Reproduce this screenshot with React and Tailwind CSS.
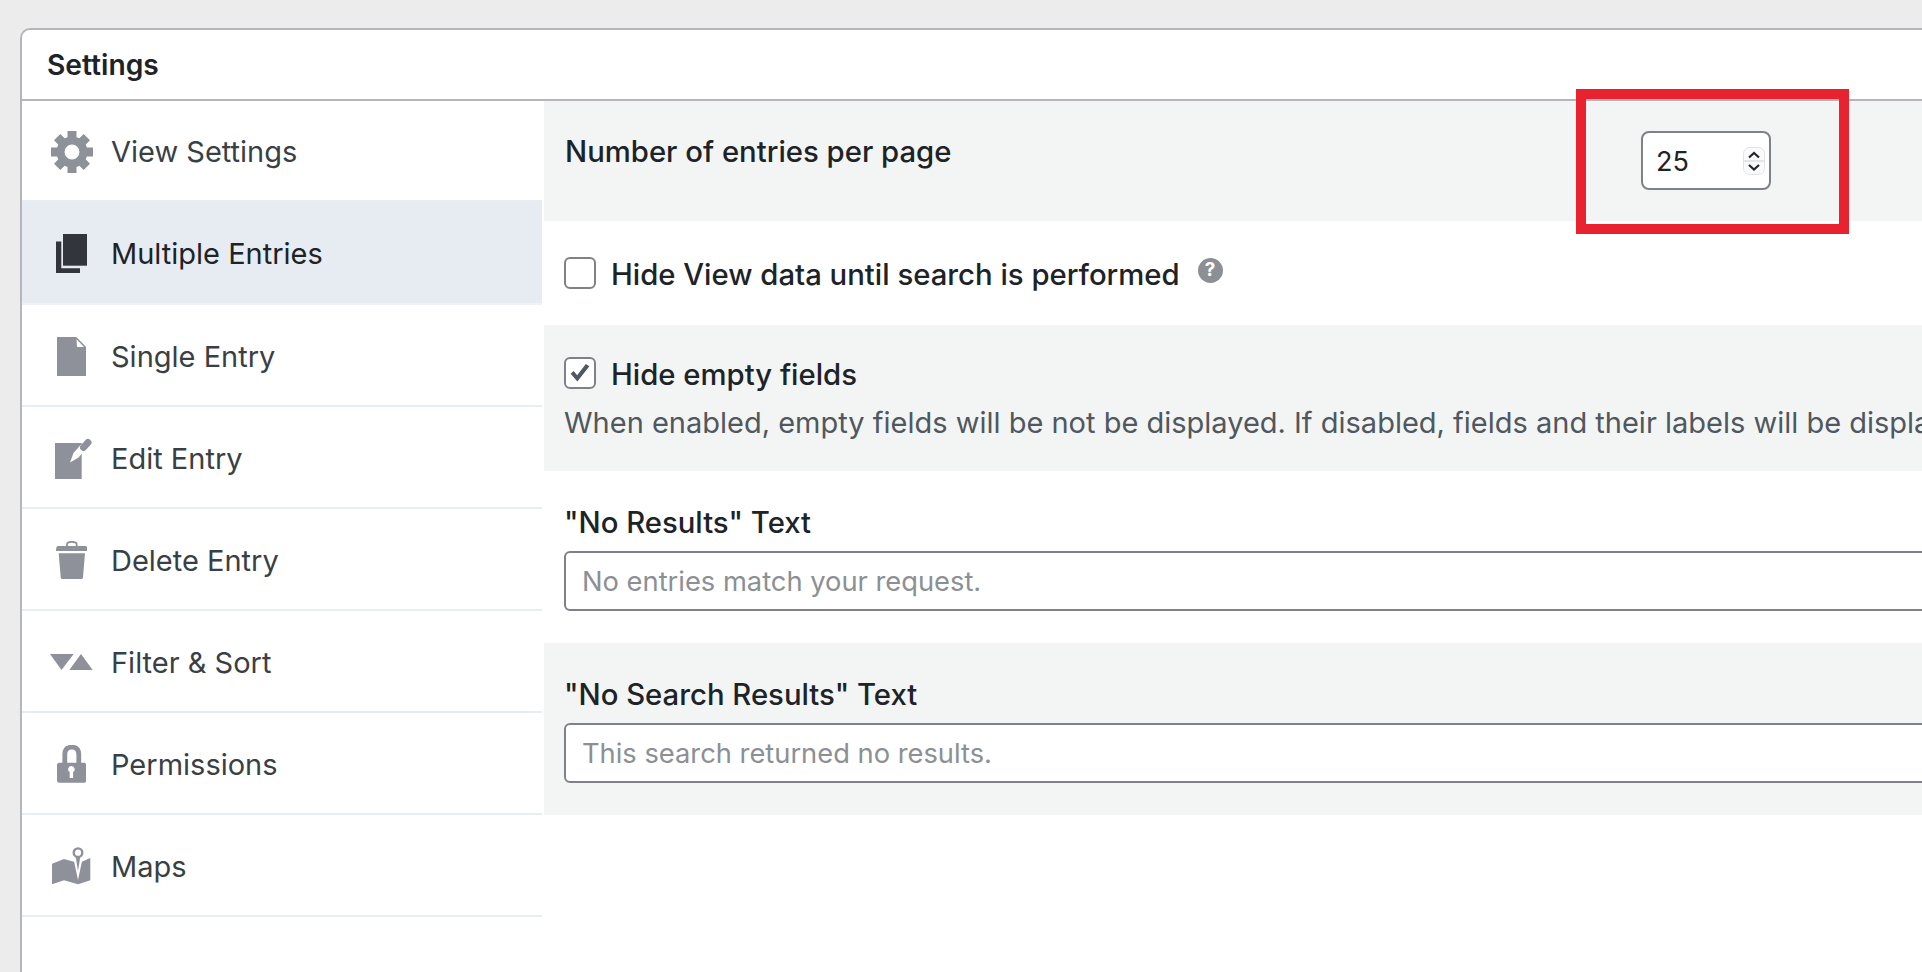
const ICON = 'fill-[#8e9199]';

const GearIcon = () => (
  <svg viewBox="0 0 42 42" className={`w-[42px] h-[42px] ${ICON}`}>
    {[0, 45, 90, 135, 180, 225, 270, 315].map(a => (
      <rect key={a} x="16.500" y="0" width="9" height="9" transform={`rotate(${a} 21 21)`} />
    ))}
    <circle cx="21" cy="21" r="11.500" fill="none" stroke="#8e9199" strokeWidth="8" />
  </svg>
);

const PagesIcon = () => (
  <svg viewBox="0 0 31.400 39" className="w-[31.400px] h-[39px] fill-[#32353b]">
    <path d="M7 0h24.400v31.700H7z" />
    <path d="M0 7.400h5.300v26.900H24V39H0z" />
  </svg>
);

const FileIcon = () => (
  <svg viewBox="0 0 29.300 39" className={`w-[29.300px] h-[39px] ${ICON}`}>
    <path d="M0 0h19.300l10 10v29H0z" />
    <path d="M19.500 2.300 27 10h-7z" className="fill-white" />
  </svg>
);

const EditIcon = () => (
  <svg viewBox="0 0 37.700 41" className={`w-[37.700px] h-[41px] ml-[5px] ${ICON}`}>
    <path d="M0 5h26.700v36H0z" />
    <path d="M15 24.500 18.500 15l7-8 5 4.500-7 8z" className="fill-white" />
    <path d="M28.500 9.500 33 4.500" stroke="#8e9199" strokeWidth="7" strokeLinecap="round" />
  </svg>
);

const TrashIcon = () => (
  <svg viewBox="0 0 31.700 38.300" className={`w-[31.700px] h-[38.300px] ${ICON}`}>
    <path d="M11 5.500V3.500C11 1.500 13 .8 15.800.8s4.900.7 4.900 2.700v2" fill="none" stroke="#8e9199" strokeWidth="1.800" />
    <path d="M2 5h27.700c1.300 0 2 1.800 2 5H0c0-3.200.7-5 2-5z" />
    <path d="M2.700 12.300h26.300l-2 24c-.1 1.300-1 2-2 2H6.700c-1 0-1.900-.7-2-2z" />
  </svg>
);

const SortIcon = () => (
  <svg viewBox="0 0 42.700 16" className={`w-[42.700px] h-[16px] ${ICON}`}>
    <path d="M0 0h23.700L11.500 16z" />
    <path d="M31 0l11.700 16H19.300z" />
  </svg>
);

const LockIcon = () => (
  <svg viewBox="0 0 29.300 37.700" className={`w-[29.300px] h-[37.700px] ${ICON}`}>
    <path d="M7.800 18v-8.500C7.800 4.500 10.500 2.200 14.800 2.200s7 2.300 7 7.300V18" fill="none" stroke="#8e9199" strokeWidth="4.800" />
    <path fillRule="evenodd" d="M2.500 17.700h24.300c1.500 0 2.500 1 2.500 2.500v15c0 1.500-1 2.500-2.500 2.500H2.500C1 37.700 0 36.700 0 35.200v-15c0-1.500 1-2.500 2.500-2.500zM14.500 21a3.300 3.300 0 0 0-1.800 6.100V33h3.400v-5.900A3.300 3.300 0 0 0 14.500 21z" />
  </svg>
);

const MapIcon = () => (
  <svg viewBox="0 0 38.300 37.300" className={`w-[38.300px] h-[37.300px] ${ICON}`}>
    <path d="M0 16.700 12 12l9 2.500 9.500 0L38.300 11v22.300L26 37.300l-14-4-12 4z" />
    <path d="M21 9.500h10L26 33z" className="fill-white" />
    <path d="M23.500 8.500h5L26 24z" />
    <circle cx="26" cy="5.700" r="4.300" fill="white" stroke="#8e9199" strokeWidth="2.400" />
  </svg>
);

const NAV = [
  { label: 'View Settings', icon: GearIcon, height: 'h-[101px] border-b-0' },
  { label: 'Multiple Entries', icon: PagesIcon, active: true, height: 'h-[103px]' },
  { label: 'Single Entry', icon: FileIcon, height: 'h-[102px]' },
  { label: 'Edit Entry', icon: EditIcon, height: 'h-[102px]' },
  { label: 'Delete Entry', icon: TrashIcon, height: 'h-[102px]' },
  { label: 'Filter & Sort', icon: SortIcon, height: 'h-[102px]' },
  { label: 'Permissions', icon: LockIcon, height: 'h-[102px]' },
  { label: 'Maps', icon: MapIcon, height: 'h-[102px]' },
];

function NavItem({ label, icon: Icon, active, height }) {
  return (
    <div className={`${height} flex items-center pt-[2px] shrink-0 border-b-2 ${active ? 'bg-[#e7ecf3] border-[#eff1f4] text-[#1d2327]' : 'border-[#e8edf2] text-[#3a3f45]'}`}>
      <div className="w-[89px] pl-[10px] flex justify-center shrink-0">
        <Icon />
      </div>
      <span className="text-[29px] leading-none">{label}</span>
    </div>
  );
}

function Checkbox({ checked }) {
  return (
    <span className="w-[32px] h-[32px] rounded-[6px] border-2 border-[#7f8188] bg-white flex items-center justify-center shrink-0">
      {checked && (
        <svg viewBox="0 0 20 20" className="w-[26px] h-[26px] fill-[#50575e]">
          <path d="M8 16.500 2.800 10.500l2.300-2 2.700 3.200L14.500 3l2.700 1.800z" />
        </svg>
      )}
    </span>
  );
}

function TextField({ label, placeholder }) {
  return (
    <>
      <div className="text-[29.300px] leading-[34px] font-medium text-[#1d2327]">{label}</div>
      <div className="mt-[11px] h-[60px] w-[1500px] border-2 border-[#7f8188] rounded-[6px] bg-white flex items-center pl-[16px] pt-[2px] text-[27.300px] text-[#8c8f94]">
        {placeholder}
      </div>
    </>
  );
}

export default function App() {
  return (
    <div className="h-screen overflow-hidden bg-[#ececec] pt-[28px] pl-[20px] font-['Inter',sans-serif]">
      <div className="h-[1000px] bg-white border-l-2 border-t-2 border-[#b5b6bc] rounded-tl-[10px]">
        <div className="h-[71px] border-b-2 border-[#b5b6bc] flex items-center pl-[25px] pt-[2px] text-[28.200px] font-semibold text-[#1d2327]">
          Settings
        </div>
        <div className="flex">
          <div className="w-[520px] shrink-0 flex flex-col">
            {NAV.map(n => <NavItem key={n.label} {...n} />)}
          </div>
          <div className="flex-1 ml-[2px] min-w-0">
            <div className="relative h-[120px] bg-[#f3f5f5] pl-[21px] flex">
              <div className="w-[1076px] shrink-0 pt-[34px] text-[29.300px] leading-[34px] font-medium text-[#1d2327]">
                Number of entries per page
              </div>
              <div className="mt-[30px] w-[130px] h-[59px] border-2 border-[#7f8188] rounded-[8px] bg-white flex items-center justify-between pl-[13px] pr-[4px] text-[27px] text-[#1d2327]">
                <span className="pt-[3px]">25</span>
                <svg viewBox="0 0 22 28" className="w-[22px] h-[28px] fill-none">
                  <rect x=".5" y=".5" width="21" height="27" rx="6" fill="#fafafa" stroke="#e2e3e5" />
                  <path d="M1 14h20" stroke="#cfd1d5" />
                  <path d="M6 10.500 11 6l5 4.500M6 18 11 22.500 16 18" stroke="#23262b" strokeWidth="2.200" />
                </svg>
              </div>
              <div className="absolute left-[1032px] top-[-12px] w-[273px] h-[145px] border-[10px] border-[#e8222e]" />
            </div>
            <div className="h-[104px] pl-[20px] flex items-center">
              <Checkbox />
              <span className="ml-[15px] pt-[4px] text-[29.300px] leading-[34px] font-medium text-[#1d2327]">Hide View data until search is performed</span>
              <span className="ml-[18px] mb-[6px] w-[25px] h-[25px] rounded-full bg-[#8c8f94] text-white text-[19px] font-bold flex items-center justify-center">?</span>
            </div>
            <div className="h-[146px] bg-[#f3f5f5] pl-[20px] pt-[32px] overflow-hidden">
              <div className="flex items-start">
                <Checkbox checked />
                <span className="ml-[15px] text-[29.300px] leading-[36px] font-medium text-[#1d2327]">Hide empty fields</span>
              </div>
              <div className="mt-[13px] text-[29px] leading-[34px] text-[#50575e] whitespace-nowrap">
                When enabled, empty fields will be not be displayed. If disabled, fields and their labels will be displayed with empty values.
              </div>
            </div>
            <div className="h-[172px] pl-[20px] pt-[35px]">
              <TextField label={'"No Results" Text'} placeholder="No entries match your request." />
            </div>
            <div className="h-[172px] bg-[#f3f5f5] pl-[20px] pt-[35px]">
              <TextField label={'"No Search Results" Text'} placeholder="This search returned no results." />
            </div>
          </div>
        </div>
      </div>
    </div>
  );
}
